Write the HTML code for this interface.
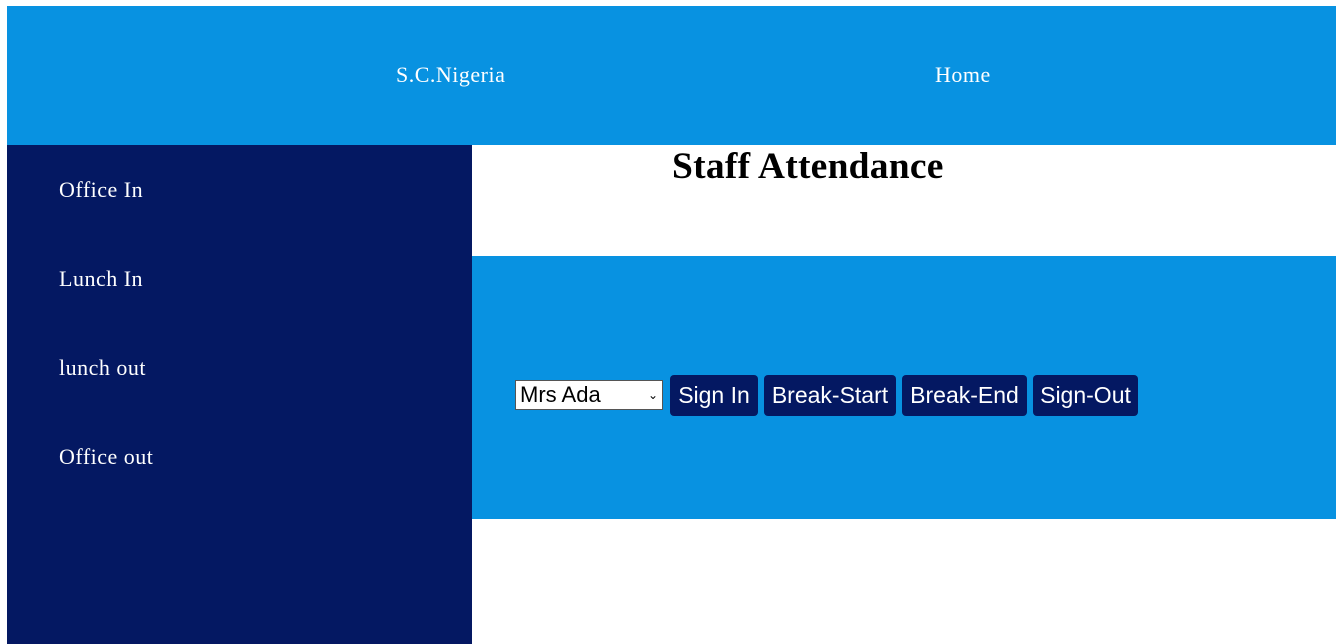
<!DOCTYPE html>
<html><head><style>
body{margin:0;width:1338px;height:644px;background:#fff;position:relative;overflow:hidden;font-family:"Liberation Serif",serif}
.a{position:absolute}
.hdr{left:7px;top:6px;width:1329px;height:139px;background:#0892e1}
.side{left:7px;top:145px;width:465px;height:499px;background:#041862}
.blk{left:472px;top:256px;width:864px;height:263px;background:#0892e1}
.t{color:#fff;font-size:22px;white-space:nowrap;letter-spacing:0.5px}
h1{position:absolute;left:672px;top:146px;margin:0;font-size:37.5px;font-weight:bold;line-height:42px;letter-spacing:0.25px}
.b{position:absolute;top:375px;height:41px;background:#041862;color:#fff;border-radius:4px;font-family:"Liberation Sans",sans-serif;font-size:23px;line-height:41px;text-align:center}
.sel{position:absolute;left:515px;top:380px;width:146px;height:28px;background:#fff;border:1px solid #555;font-family:"Liberation Sans",sans-serif;font-size:22px;line-height:28px;box-sizing:content-box}
</style></head><body>
<div class="a hdr"></div>
<div class="a t" style="left:396px;top:62px">S.C.Nigeria</div>
<div class="a t" style="left:935px;top:62px">Home</div>
<div class="a side"></div>
<div class="a t" style="left:59px;top:177px">Office In</div>
<div class="a t" style="left:59px;top:266px">Lunch In</div>
<div class="a t" style="left:59px;top:355px">lunch out</div>
<div class="a t" style="left:59px;top:444px">Office out</div>
<h1>Staff Attendance</h1>
<div class="a blk"></div>
<div class="sel"><span style="margin-left:4px">Mrs Ada</span><span style="position:absolute;right:4px;top:0;font-size:12px">&#8964;</span></div>
<div class="b" style="left:670px;width:88px">Sign In</div>
<div class="b" style="left:764px;width:132px">Break-Start</div>
<div class="b" style="left:902px;width:125px">Break-End</div>
<div class="b" style="left:1033px;width:105px">Sign-Out</div>
</body></html>
